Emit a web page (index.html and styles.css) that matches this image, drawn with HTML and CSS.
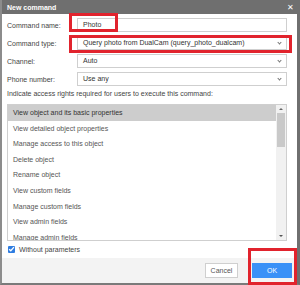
FILE: index.html
```html
<!DOCTYPE html>
<html>
  <head>
    <meta charset="utf-8">
    <title>New command</title>
    <link rel="stylesheet" href="styles.css">
  </head>
  <body>

    <div class="screen">
      <div class="dialog">
        <div class="titlebar">
          <span>New command</span>
          <span class="close">&#x2715;</span>
        </div>

        <div class="content">
          <div class="form-row">
            <label>Command name:</label>
            <div class="field">Photo</div>
          </div>
          <div class="form-row">
            <label>Command type:</label>
            <div class="field select">Query photo from DualCam (query_photo_dualcam)</div>
          </div>
          <div class="form-row">
            <label>Channel:</label>
            <div class="field select">Auto</div>
          </div>
          <div class="form-row">
            <label>Phone number:</label>
            <div class="field select">Use any</div>
          </div>

          <p class="hint">Indicate access rights required for users to execute this command:</p>

          <div class="list">
            <ul>
              <li class="selected">View object and its basic properties</li>
              <li>View detailed object properties</li>
              <li>Manage access to this object</li>
              <li>Delete object</li>
              <li>Rename object</li>
              <li>View custom fields</li>
              <li>Manage custom fields</li>
              <li>View admin fields</li>
              <li>Manage admin fields</li>
            </ul>
            <div class="scrollbar">
              <span class="arrow up"></span>
              <span class="thumb"></span>
              <span class="arrow down"></span>
            </div>
          </div>

          <div class="check-row">
            <span class="checkbox">
              <svg width="8" height="8" viewBox="0 0 8 8"><path d="M1.3 4.2 L3.2 6 L6.8 1.8" fill="none" stroke="#fff" stroke-width="1.5"/></svg>
            </span>
            Without parameters
          </div>
        </div>

        <div class="footer">
          <button type="button" class="btn">Cancel</button>
          <button type="button" class="btn primary">OK</button>
        </div>
      </div>

      <!-- annotation frames -->
      <span class="mark mark-name"></span>
      <span class="mark mark-type"></span>
      <span class="mark mark-ok"></span>
    </div>

  </body>
</html>
```

FILE: styles.css
```css
body {
  margin: 0;
  background: #fff;
  font-family: "Liberation Sans", Arial, sans-serif;
  font-size: 7px;
  color: #444;
}

.screen {
  position: relative;
  width: 300px;
  height: 285px;
  overflow: hidden;
}

.dialog {
  width: 300px;
  height: 285px;
  box-sizing: border-box;
  border-left: 2px solid #8c8c8c;
  border-right: 3px solid #6f6f6f;
  border-bottom: 2px solid #7a7a7a;
  display: flex;
  flex-direction: column;
  overflow: hidden;
}

.titlebar {
  height: 14px;
  background: #6f6f6f;
  color: #fff;
  font-weight: bold;
  display: flex;
  align-items: center;
  justify-content: space-between;
  margin-left: -2px;
  margin-right: -3px;
  padding: 0 6px 0 7px;
}

.close {
  font-size: 8px;
  font-weight: normal;
}

.content {
  padding: 4px 10px 0 5px;
  display: flex;
  flex-direction: column;
}

.form-row {
  display: flex;
  align-items: center;
  height: 14px;
  margin-bottom: 4px;
}

.form-row label {
  width: 70px;
  flex-shrink: 0;
}

.field {
  flex: 1;
  height: 14px;
  box-sizing: border-box;
  border: 1px solid #cfcfcf;
  padding: 0 5px;
  line-height: 12px;
  color: #333;
  position: relative;
}

.select::after {
  content: "";
  position: absolute;
  right: 5px;
  top: 4px;
  width: 2px;
  height: 2px;
  border-right: 1px solid #777;
  border-bottom: 1px solid #777;
  transform: rotate(45deg);
}

.hint {
  margin: 0;
  line-height: 10px;
  margin-top: -1px;
}

.list {
  margin-top: 5px;
  height: 137px;
  box-sizing: border-box;
  border: 1px solid #cfcfcf;
  display: flex;
  overflow: hidden;
}

.list ul {
  flex: 1;
  margin: 0;
  padding: 0;
  list-style: none;
}

.list li {
  height: 15.6px;
  line-height: 15.6px;
  padding-left: 5px;
  color: #555;
}

.list li.selected {
  background: #cdcdcd;
  color: #333;
}

.scrollbar {
  width: 10px;
  background: #f1f1f1;
  display: flex;
  flex-direction: column;
  align-items: center;
}

.arrow {
  width: 0;
  height: 0;
  border-left: 2px solid transparent;
  border-right: 2px solid transparent;
  margin: 3px 0;
}

.arrow.up {
  border-bottom: 2px solid #666;
}

.arrow.down {
  border-top: 2px solid #555;
  margin-top: auto;
}

.thumb {
  width: 8px;
  height: 34px;
  background: #c9c9c9;
}

.check-row {
  display: flex;
  align-items: center;
  height: 12px;
  margin-top: 2px;
  gap: 4px;
  padding-left: 1px;
  color: #444;
}

.checkbox {
  width: 7px;
  height: 7px;
  background: #2f7de1;
  border-radius: 1px;
  display: flex;
  align-items: center;
  justify-content: center;
}

.footer {
  margin-top: auto;
  height: 25px;
  background: #f3f3f3;
  display: flex;
  align-items: center;
  justify-content: flex-end;
  gap: 14px;
  padding-right: 5px;
}

.btn {
  height: 15px;
  padding: 0;
  font-family: inherit;
  font-size: 7px;
  border: 1px solid #cfcfcf;
  background: #fff;
  color: #555;
  width: 33px;
}

.btn.primary {
  width: 40px;
  background: #3a91f7;
  border-color: #3a91f7;
  color: #fff;
}

.mark {
  position: absolute;
  border: 3px solid #e1232d;
  box-sizing: border-box;
}

.mark-name {
  left: 69px;
  top: 13px;
  width: 49px;
  height: 19px;
}

.mark-type {
  left: 69px;
  top: 35px;
  width: 223px;
  height: 18px;
}

.mark-ok {
  left: 248px;
  top: 248px;
  width: 49px;
  height: 37px;
}
```
